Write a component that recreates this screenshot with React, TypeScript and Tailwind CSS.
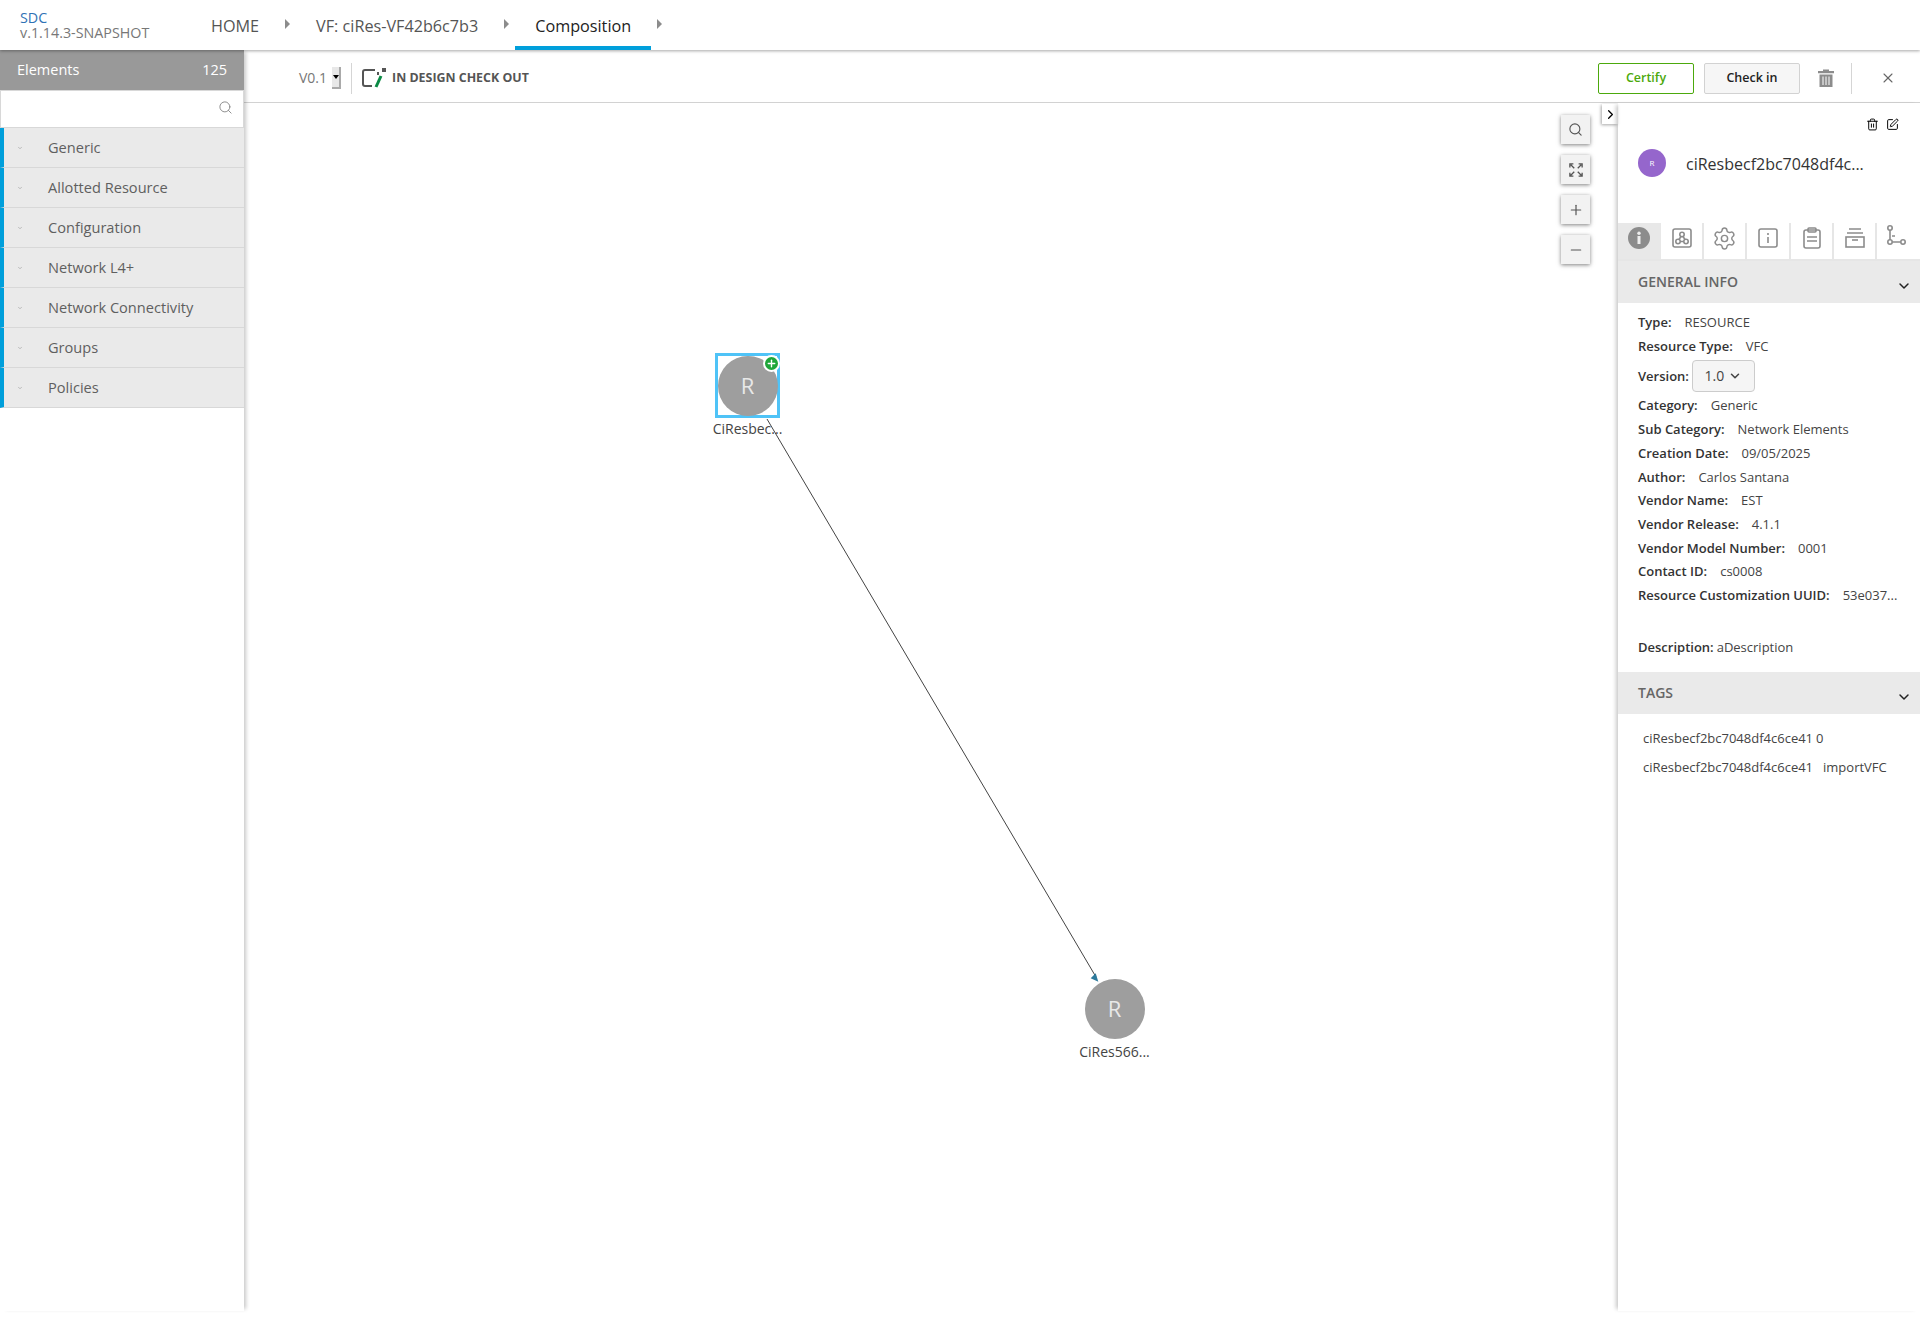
import { ChevronDown, ChevronRight, Minus, Plus, Search, Settings, SquarePen, Trash2, X } from "lucide-react";

const categories = ["Generic", "Allotted Resource", "Configuration", "Network L4+", "Network Connectivity", "Groups", "Policies"];

const infoRows: [string, string][] = [
	["Category:", "Generic"],
	["Sub Category:", "Network Elements"],
	["Creation Date:", "09/05/2025"],
	["Author:", "Carlos Santana"],
	["Vendor Name:", "EST"],
	["Vendor Release:", "4.1.1"],
	["Vendor Model Number:", "0001"],
	["Contact ID:", "cs0008"],
	["Resource Customization UUID:", "53e037..."],
];

function Row({ label, value }: { label: string; value: string }) {
	return (
		<div className="flex h-[23.7px] items-center gap-[13px] text-[13px] text-[#444]">
			<span className="font-semibold text-[#333]">{label}</span>
			<span>{value}</span>
		</div>
	);
}

function SectionHeader({ title }: { title: string }) {
	return (
		<div className="relative flex h-[42px] items-center bg-[#eaeaea] pl-5 text-sm font-semibold text-[#666]">
			{title}
			<ChevronDown size={16} strokeWidth={2.2} className="absolute right-2 top-[17px] text-[#222]" />
		</div>
	);
}

function NavItem({ label, active }: { label: string; active?: boolean }) {
	return (
		<div className="flex items-center">
			<div className={`flex h-[50px] items-center border-b-4 px-5 pt-[6px] text-[16.2px] ${active ? "border-[#009fdb] text-[#222]" : "border-transparent text-[#555]"}`}>{label}</div>
			<div className="mx-[6px] mb-[2px] h-0 w-0 border-y-[5px] border-l-[5px] border-y-transparent border-l-[#8c8c8c]" />
		</div>
	);
}

function ZoomButton({ children }: { children: React.ReactNode }) {
	return <div className="flex h-[29px] w-[29px] items-center justify-center bg-[#f2f2f2] text-[#555] shadow-[0_1px_4px_rgba(0,0,0,0.5)]">{children}</div>;
}

function Node({ name, selected, className }: { name: string; selected?: boolean; className: string }) {
	return (
		<div className={`absolute flex w-[91px] flex-col items-center ${className}`}>
			<div className={`relative flex h-[65px] w-[65px] items-center justify-center ${selected ? "border-[3px] border-[#4fc3f7]" : ""}`}>
				<div className="flex h-[60px] w-[60px] shrink-0 items-center justify-center rounded-full bg-[#9e9e9e] text-[22px] text-[#e8e8e8]">R</div>
				{selected && (
					<div className="absolute right-[-3px] top-[-1px] flex h-[17px] w-[17px] items-center justify-center rounded-full border-2 border-white bg-[#1fa63a] text-white">
						<Plus size={11} strokeWidth={3} />
					</div>
				)}
			</div>
			<div className="text-sm leading-[21px] text-[#444]">{name}</div>
		</div>
	);
}

export default function App() {
	return (
		<div className="relative h-[1319px] w-[1920px] overflow-hidden bg-white font-['Open_Sans',sans-serif]">
			<header className="relative z-10 flex h-[50px] items-center bg-white pl-5 shadow-[0_1px_3px_rgba(0,0,0,0.35)]">
				<div className="w-[171px] text-[14.3px] leading-[15px]">
					<div className="text-[#2f72b5]">SDC</div>
					<div className="text-[#777]">v.1.14.3-SNAPSHOT</div>
				</div>
				<NavItem label="HOME" />
				<NavItem label="VF: ciRes-VF42b6c7b3" />
				<NavItem label="Composition" active />
			</header>

			<div className="flex h-[1261px]">
				<aside className="relative z-[5] w-[244px] shrink-0 shadow-[4px_0_4px_-2px_rgba(0,0,0,0.22)]">
					<div className="flex h-10 items-center justify-between bg-[#999] px-[17px] text-[14.5px] font-medium text-white">
						<span>Elements</span>
						<span>125</span>
					</div>
					<div className="flex h-[38px] items-center justify-end border border-[#d8d8d8] bg-white pb-[3px] pr-[10px] text-[#888]">
						<Search size={15} strokeWidth={1.5} />
					</div>
					{categories.map((name) => (
						<div key={name} className="flex h-10 items-center border-b border-l-4 border-b-[#d8d8d8] border-l-[#009fdb] bg-[#eaeaea] text-[14.6px] font-medium text-[#5f5f5f]">
							<ChevronDown size={6} className="ml-[13px] mr-[25px] shrink-0 text-[#888]" />
							<span>{name}</span>
						</div>
					))}
				</aside>

				<div className="flex min-w-0 flex-1 flex-col">
					<div className="flex h-[53px] shrink-0 items-center border-b border-[#d2d2d2] bg-white pr-6 pt-[4px]">
						<span className="ml-[55px] text-sm text-[#777]">V0.1</span>
						<div className="ml-[5px] flex h-[22px] w-[9px] items-center justify-center border-b-2 border-r-2 border-[#aaa] bg-[#e8e8e8]">
							<div className="h-0 w-0 border-x-[3px] border-t-[4px] border-x-transparent border-t-black" />
						</div>
						<div className="ml-[10px] h-[31px] w-px bg-[#d5d5d5]" />
						<svg width="25" height="20" viewBox="0 0 25 20" className="ml-[10px]">
							<path d="M13 2H3a2 2 0 0 0-2 2v12a2 2 0 0 0 2 2h7" fill="none" stroke="#555" strokeWidth="2" />
							<path d="M16 4v3" fill="none" stroke="#555" strokeWidth="2" />
							<rect x="20" y="0" width="4" height="4" fill="#555" />
							<path d="M19 8l-5 11" stroke="#0a8a45" strokeWidth="3" />
						</svg>
						<span className="ml-[5px] text-[12.4px] font-bold text-[#555]">IN DESIGN CHECK OUT</span>
						<div className="ml-auto flex h-[31px] w-24 items-center justify-center rounded-[2px] border border-[#4ca90c] text-[12.5px] font-semibold text-[#4ca90c]">Certify</div>
						<div className="ml-[10px] flex h-[31px] w-24 items-center justify-center rounded-[2px] border border-[#d2d2d2] bg-[#f6f6f6] text-[12.5px] font-semibold text-[#222]">Check in</div>
						<svg width="18" height="18" viewBox="0 0 18 18" className="ml-[17px]">
							<path d="M6 2V0.5h6V2h5v2.2H1V2z" fill="#8c8c8c" />
							<path d="M2.5 5.5h13V18h-13z" fill="#8c8c8c" />
							<path d="M6 7.5v8.5M9 7.5v8.5M12 7.5v8.5" stroke="#fff" strokeWidth="1" />
						</svg>
						<div className="ml-4 h-[31px] w-px bg-[#d5d5d5]" />
						<X size={16} strokeWidth={1.6} className="ml-[28px] text-[#666]" />
					</div>

					<div className="flex min-h-0 flex-1">
						<main className="relative min-w-0 flex-1">
							<svg width="1373" height="1208" className="absolute left-0 top-0">
								<line x1="523" y1="316" x2="852" y2="874" stroke="#444" strokeWidth="1" />
								<path d="M854.3 878.7L846.7 875.3L851.7 870.3z" fill="#2d7a9c" />
							</svg>
							<Node name="CiResbec..." selected className="left-[458px] top-[250px]" />
							<Node name="CiRes566..." className="left-[825px] top-[873px]" />
							<div className="absolute right-[28px] top-[12px] flex flex-col gap-[11px]">
								<ZoomButton><Search size={15} strokeWidth={1.8} /></ZoomButton>
								<ZoomButton>
									<svg width="14" height="14" viewBox="0 0 16 16" fill="none" stroke="currentColor" strokeWidth="1.5">
										<path d="M1 5V1h4M11 1h4v4M15 11v4h-4M5 15H1v-4M2 2l4 4M14 2l-4 4M14 14l-4-4M2 14l4-4" />
									</svg>
								</ZoomButton>
								<ZoomButton><Plus size={16} strokeWidth={1.8} /></ZoomButton>
								<ZoomButton><Minus size={16} strokeWidth={1.8} /></ZoomButton>
							</div>
							<div className="absolute right-0 top-[1px] flex h-[20px] w-4 items-center justify-center bg-white text-black shadow-[-1px_1px_3px_rgba(0,0,0,0.35)]">
								<ChevronRight size={15} strokeWidth={2} />
							</div>
						</main>

						<section className="relative w-[302px] shrink-0 shadow-[-4px_0_4px_-2px_rgba(0,0,0,0.22)]">
							<div className="relative h-[120px]">
								<Trash2 size={13} strokeWidth={1.8} className="absolute left-[248px] top-[15px] text-black" />
								<SquarePen size={13} strokeWidth={1.8} className="absolute left-[268px] top-[15px] text-black" />
								<div className="absolute left-5 top-[46px] flex h-7 w-7 items-center justify-center rounded-full bg-[#9566cc] text-[8px] text-white">R</div>
								<div className="absolute left-[68px] top-[49px] text-base text-[#333]">ciResbecf2bc7048df4c...</div>
							</div>
							<div className="flex h-[38px] border-b-2 border-[#e6e6e6] text-[#8c8c8c]">
								<div className="flex w-[43px] justify-center bg-[#e8e8e8] pr-[2px] pt-[4px]">
									<svg width="22" height="22" viewBox="0 0 22 22">
										<circle cx="11" cy="11" r="11" fill="#8c8c8c" />
										<rect x="9.5" y="9" width="3" height="8" fill="#eee" />
										<circle cx="11" cy="6.2" r="1.7" fill="#eee" />
									</svg>
								</div>
								<div className="flex w-[43px] justify-center border-r-2 border-[#e6e6e6] pt-[5px]">
									<svg width="20" height="20" viewBox="0 0 20 20" fill="none" stroke="currentColor" strokeWidth="1.6">
										<rect x="1" y="1" width="18" height="18" rx="2" />
										<circle cx="10" cy="6.5" r="2.2" />
										<circle cx="6" cy="13.5" r="2.2" />
										<circle cx="14" cy="13.5" r="2.2" />
										<path d="M9 8.5l-2 3M11 8.5l2 3M8.2 13.5h3.6" />
									</svg>
								</div>
								<div className="flex w-[43px] justify-center border-r-2 border-[#e6e6e6] pt-[3px]">
									<Settings size={25} strokeWidth={1.4} />
								</div>
								<div className="flex w-[44px] justify-center border-r-2 border-[#e6e6e6] pt-[5px]">
									<svg width="20" height="20" viewBox="0 0 20 20" fill="none" stroke="currentColor" strokeWidth="1.6">
										<rect x="1" y="1" width="18" height="18" rx="2" />
										<path d="M10 9v6M10 5v2" />
									</svg>
								</div>
								<div className="flex w-[43px] justify-center border-r-2 border-[#e6e6e6] pt-[4px]">
									<svg width="18" height="22" viewBox="0 0 18 22" fill="none" stroke="currentColor" strokeWidth="1.6">
										<rect x="1" y="3" width="16" height="18" rx="2" />
										<rect x="5" y="1" width="8" height="4" rx="1" />
										<path d="M4 10h10M4 14h10" />
									</svg>
								</div>
								<div className="flex w-[43px] justify-center border-r-2 border-[#e6e6e6] pt-[5px]">
									<svg width="20" height="20" viewBox="0 0 20 20" fill="none" stroke="currentColor" strokeWidth="1.6">
										<path d="M4 1h12M2 5h16" />
										<rect x="1" y="9" width="18" height="10" />
										<path d="M7 12h6" />
									</svg>
								</div>
								<div className="flex flex-1 justify-center pr-[6px] pt-[2px]">
									<svg width="20" height="22" viewBox="0 0 20 22" fill="none" stroke="currentColor" strokeWidth="1.6">
										<circle cx="4" cy="3" r="2.2" />
										<circle cx="4" cy="17" r="2.2" />
										<circle cx="17" cy="17" r="2.2" />
										<path d="M4 5v10M6.5 17h8M6 11h3" />
									</svg>
								</div>
							</div>
							<SectionHeader title="GENERAL INFO" />
							<div className="pb-[12.5px] pl-5 pt-[8px]">
								<Row label="Type:" value="RESOURCE" />
								<Row label="Resource Type:" value="VFC" />
								<div className="flex h-[36px] items-center text-[13px] font-semibold text-[#333]">
									<span>Version:</span>
									<div className="ml-[3px] flex h-8 w-[63px] items-center justify-center gap-1 rounded-[4px] border border-[#ccc] bg-[#f5f5f5] text-sm font-normal text-[#444]">
										1.0
										<ChevronDown size={14} strokeWidth={2.6} />
									</div>
								</div>
								{infoRows.map(([label, value]) => (
									<Row key={label} label={label} value={value} />
								))}
								<div className="mt-[28px] flex h-[23.7px] items-center gap-[3px] text-[13px] text-[#444]">
									<span className="font-semibold text-[#333]">Description:</span>
									<span>aDescription</span>
								</div>
							</div>
							<SectionHeader title="TAGS" />
							<div className="pl-[25px] pt-[10px] text-[13px] text-[#444]">
								<div className="flex h-[30px] items-center gap-[3px]">
									<span>ciResbecf2bc7048df4c6ce41</span>
									<span>0</span>
								</div>
								<div className="flex h-[28px] items-center gap-[10px]">
									<span>ciResbecf2bc7048df4c6ce41</span>
									<span>importVFC</span>
								</div>
							</div>
						</section>
					</div>
				</div>
			</div>
		</div>
	);
}
